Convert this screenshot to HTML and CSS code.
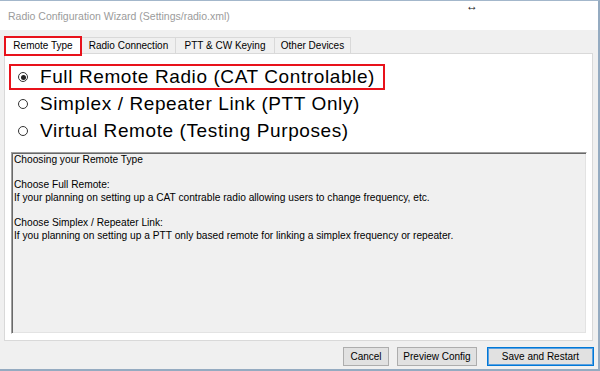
FILE: index.html
```html
<!DOCTYPE html>
<html>
<head>
<meta charset="utf-8">
<link rel="stylesheet" href="styles.css">
</head>
<body>
<div class="window">
  <div class="titlebar">
    <span class="title">Radio Configuration Wizard (Settings/radio.xml)</span>
    <span class="cursor">&#8596;</span>
  </div>
  <div class="client">
    <div class="tabs">
      <div class="tab active">Remote Type</div>
      <div class="tab t-radio">Radio Connection</div>
      <div class="tab t-ptt">PTT &amp; CW Keying</div>
      <div class="tab t-other">Other Devices</div>
    </div>
    <div class="panel">
      <div class="options">
        <div class="option highlight"><span class="radio checked"></span><span class="label">Full Remote Radio (CAT Controlable)</span></div>
        <div class="option"><span class="radio"></span><span class="label">Simplex / Repeater Link (PTT Only)</span></div>
        <div class="option"><span class="radio"></span><span class="label">Virtual Remote (Testing Purposes)</span></div>
      </div>
      <div class="infobox">
        <p>Choosing your Remote Type</p>
        <p>Choose Full Remote:<br>If your planning on setting up a CAT contrable radio allowing users to change frequency, etc.</p>
        <p>Choose Simplex / Repeater Link:<br>If you planning on setting up a PTT only based remote for linking a simplex frequency or repeater.</p>
      </div>
    </div>
    <div class="buttons">
      <button class="btn btn-cancel">Cancel</button>
      <button class="btn btn-preview">Preview Config</button>
      <button class="btn btn-save">Save and Restart</button>
    </div>
  </div>
</div>
</body>
</html>
```

FILE: styles.css
```css
html, body {
  margin: 0;
  padding: 0;
  width: 600px;
  height: 371px;
  overflow: hidden;
  background: #f0f0f0;
}

.window {
  box-sizing: border-box;
  width: 600px;
  height: 371px;
  border-top: 1px solid #a3b7cb;
  border-right: 2px solid #95abc1;
  border-bottom: 2px solid #95abc1;
  display: flex;
  flex-direction: column;
  font-family: "Liberation Sans", Arial, sans-serif;
  color: #000;
}

.titlebar {
  height: 29px;
  flex: none;
  background: #fff;
  display: flex;
  align-items: center;
  padding-left: 8px;
  position: relative;
}

.title {
  font-size: 10.5px;
  color: #9b9b9b;
}

.cursor {
  position: absolute;
  left: 466px;
  top: 0;
  font-size: 12px;
  line-height: 10px;
  font-weight: bold;
  color: #111;
}

.client {
  flex: 1;
  display: flex;
  flex-direction: column;
  padding: 6px 4px 0 4px;
}

.tabs {
  display: flex;
  align-items: flex-end;
  height: 17px;
  flex: none;
}

.tab {
  box-sizing: border-box;
  height: 16px;
  border: 1px solid #d9d9d9;
  border-bottom: none;
  background: #f0f0f0;
  font-size: 10px;
  display: flex;
  align-items: center;
  justify-content: center;
  margin-left: -1px;
}

.tab.active {
  width: 78px;
  height: 20px;
  margin-left: 0;
  margin-bottom: -3px;
  border: 2px solid #e8121b;
  background: #fff;
  position: relative;
  z-index: 1;
  padding-bottom: 2px;
}

.t-radio { width: 95px; }
.t-ptt { width: 100px; }
.t-other { width: 77px; }

.panel {
  box-sizing: border-box;
  width: 589px;
  height: 288px;
  flex: none;
  background: #fff;
  border: 1px solid #d9d9d9;
  padding: 10px 0 0 4px;
}

.options {
  display: flex;
  flex-direction: column;
  gap: 1px;
}

.option {
  box-sizing: border-box;
  width: 376px;
  height: 26px;
  border: 2px solid transparent;
  display: flex;
  align-items: center;
  padding-left: 7px;
  font-size: 19px;
  letter-spacing: 0.6px;
  white-space: nowrap;
}

.option.highlight {
  border-color: #e8121b;
}

.radio {
  box-sizing: border-box;
  width: 10px;
  height: 10px;
  border: 1px solid #333;
  border-radius: 50%;
  background: #fff;
  margin-right: 12px;
  flex: none;
  display: flex;
  align-items: center;
  justify-content: center;
}

.radio.checked::after {
  content: "";
  width: 5px;
  height: 5px;
  border-radius: 50%;
  background: #222;
}

.infobox {
  box-sizing: border-box;
  width: 576px;
  height: 182px;
  margin: 8px 0 0 2px;
  background: #f0f0f0;
  border: 1px solid;
  border-color: #a0a0a0 #fff #fff #a0a0a0;
  box-shadow: inset 1px 1px 0 #696969, inset -1px -1px 0 #e3e3e3;
  padding: 1px 2px;
  font-size: 10.2px;
  line-height: 12.7px;
}

.infobox p {
  margin: 0 0 12.7px 0;
}

.buttons {
  display: flex;
  justify-content: flex-end;
  padding-top: 6px;
}

.btn {
  box-sizing: border-box;
  height: 19px;
  padding: 0;
  background: #e1e1e1;
  border: 1px solid #adadad;
  font-family: "Liberation Sans", Arial, sans-serif;
  font-size: 10px;
  color: #000;
}

.btn-cancel { width: 46px; margin-right: 8px; }
.btn-preview { width: 80px; margin-right: 10px; }
.btn-save {
  width: 107px;
  border-color: #0078d7;
  box-shadow: inset 0 0 0 1px #5aa0e0;
}
```
